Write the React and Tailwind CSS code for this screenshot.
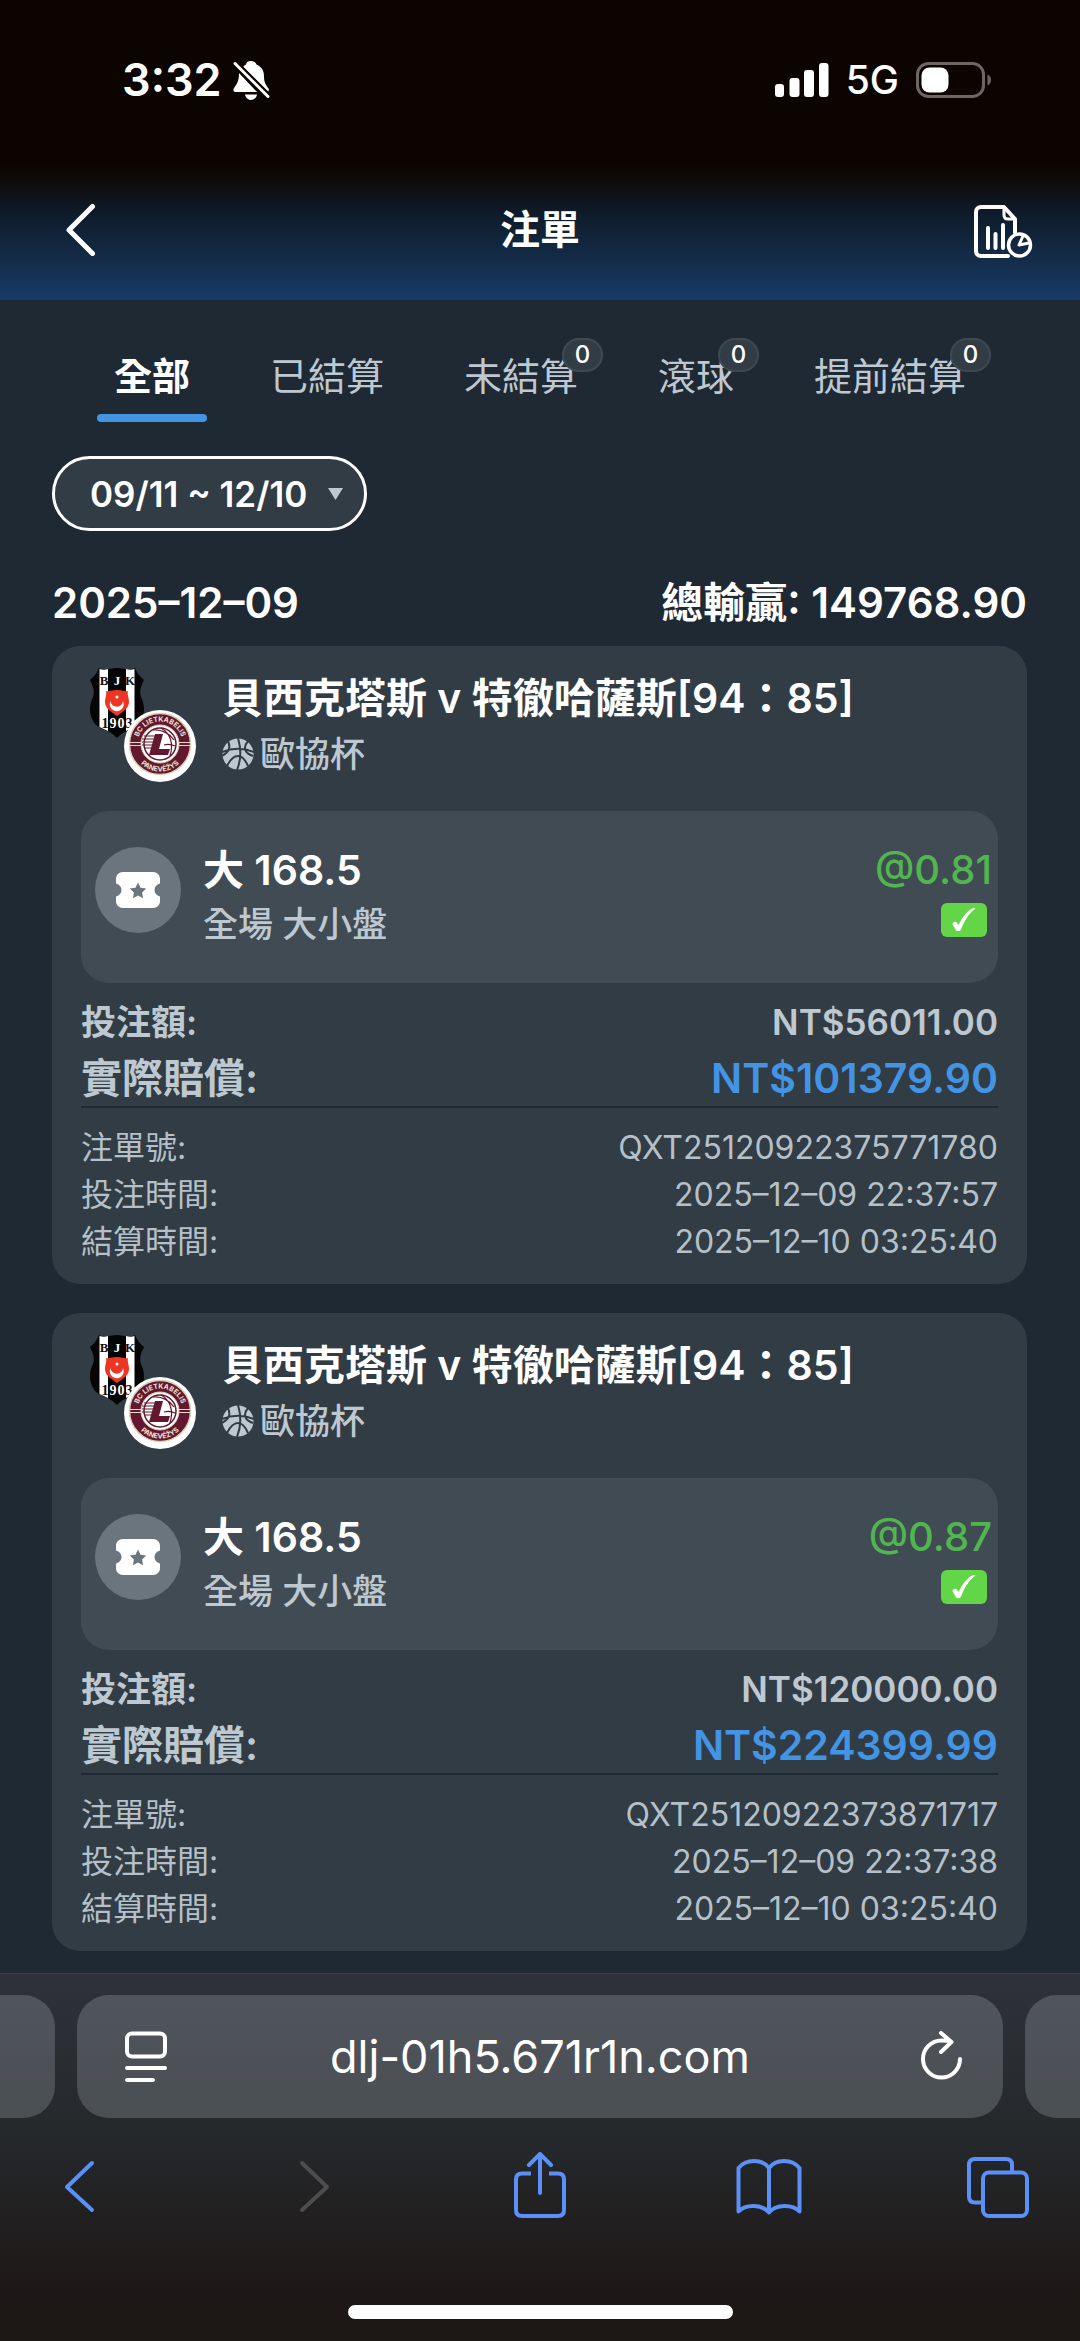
import React, { useState } from 'react';

const tabs = [
  { id: 'all', label: '全部' },
  { id: 'settled', label: '已結算' },
  { id: 'unsettled', label: '未結算', count: 0 },
  { id: 'live', label: '滾球', count: 0 },
  { id: 'early', label: '提前結算', count: 0 },
];

const bets = [
  {
    id: 'QXT25120922375771780',
    match: '貝西克塔斯 v 特徹哈薩斯[94：85]',
    league: '歐協杯',
    pick: '大 168.5',
    market: '全場 大小盤',
    odds: '@0.81',
    stake: 'NT$56011.00',
    payout: 'NT$101379.90',
    placedAt: '2025–12–09 22:37:57',
    settledAt: '2025–12–10 03:25:40',
  },
  {
    id: 'QXT25120922373871717',
    match: '貝西克塔斯 v 特徹哈薩斯[94：85]',
    league: '歐協杯',
    pick: '大 168.5',
    market: '全場 大小盤',
    odds: '@0.87',
    stake: 'NT$120000.00',
    payout: 'NT$224399.99',
    placedAt: '2025–12–09 22:37:38',
    settledAt: '2025–12–10 03:25:40',
  },
];

const StatusBar = () => (
  <div className="flex h-[160px] items-center justify-between pl-[122px] pr-[88px]">
    <div className="flex items-center gap-[11px]">
      <span className="text-[45px] font-semibold leading-[56px]">3:32</span>
      <svg className="h-[40px] w-[37px]" viewBox="0 0 37 40" fill="#fff">
        <path d="M18 1c3 0 5 2 5.500 3.500C29 7 31 11 31 16c0 7 2 9 4.500 12.500.5 1 .5 2-.5 3L10 7c1-1 2-2 3-2.500C13.500 2 15 1 18 1z" />
        <path d="M6 13L24 32H2.500C0 32 0 29.500 1 28c3-4 5-7 5-15z" />
        <path d="M12 34.500h12c-.5 3-3 5.500-6 5.500s-5.500-2.500-6-5.500z" />
        <path d="M2 3.500L35 36.500" stroke="#0c0400" strokeWidth="7" />
        <path d="M2 3.500L35 36.500" stroke="#fff" strokeWidth="3" strokeLinecap="round" />
      </svg>
    </div>
    <div className="flex items-center gap-[17px]">
      <svg className="h-[34px] w-[54px]" viewBox="0 0 54 34" fill="#fff">
        <rect x="0" y="21" width="9" height="13" rx="3" />
        <rect x="14.500" y="15" width="10" height="19" rx="3" />
        <rect x="29" y="7" width="10" height="27" rx="3" />
        <rect x="44" y="0" width="9.500" height="34" rx="3" />
      </svg>
      <span className="text-[39px] font-medium leading-[56px]">5G</span>
      <svg className="h-[36px] w-[76px]" viewBox="0 0 76 36">
        <rect x="1.500" y="1.500" width="66" height="33" rx="11" fill="none" stroke="#6d6665" strokeWidth="3" />
        <rect x="5.500" y="5.500" width="27" height="25" rx="8" fill="#fff" />
        <path d="M71.500 12.500c2.500 1 3.500 3 3.500 5.500s-1 4.500-3.500 5.500z" fill="#6d6665" />
      </svg>
    </div>
  </div>
);

const ReportIcon = () => (
  <svg className="h-[58px] w-[60px]" viewBox="0 -4 60 58" fill="none" stroke="#fff" strokeWidth="4" strokeLinejoin="round" strokeLinecap="round">
    <path d="M34 51H7c-3 0-5-2-5-5V7c0-3 2-5 5-5h23l11 12v14" />
    <path d="M30 3v7c0 3 1.500 4 4 4h7" strokeWidth="3" />
    <path d="M14 23v20M21.500 29v14M29 20v23" />
    <circle cx="45.500" cy="40" r="11" strokeWidth="3.500" />
    <path d="M49 31l-4 9 10-2" strokeWidth="3" />
  </svg>
);

const BjkLogo = () => (
  <svg className="absolute left-[9px] top-0 h-[70px] w-[54px]" viewBox="0 0 54 70">
    <path d="M9 0C15 3 21 0 27 0s12 3 18 0c2 5 5 9 9 12-3 6-5 11-3 17 3 6 4 13 2 19-2 8-8 12-14 14-5 2-8 4-12 8-4-4-7-6-12-8C9 60 3 56 1 48c-2-6-1-13 2-19 2-6 0-11-3-17 4-3 7-7 9-12z" fill="#050505" />
    <path d="M9.500 1c3 1 6 1 8.500 0v62l-8.500-4z" fill="#fff" />
    <path d="M36 1c3 1 6 1 8.500 0v58L36 63z" fill="#fff" />
    <path d="M16 23c3 1 5-1 11-1s8 2 11 1c-1 4 1 6 1 11 0 6-5 9-12 14-7-5-12-8-12-14 0-5 2-7 1-11z" fill="#ee3524" />
    <path d="M20.500 33a7 7 0 1 0 12.500 0a6 5.500 0 1 1-12.500 0z" fill="#fff" />
    <circle cx="27" cy="29" r="1.500" fill="#fff" />
    <g fontFamily="Liberation Serif, serif" fontWeight="700" fontSize="13" textAnchor="middle">
      <text x="14" y="17" fill="#111">B</text>
      <text x="27" y="17" fill="#fff">J</text>
      <text x="40" y="17" fill="#111">K</text>
    </g>
    <g fontFamily="Liberation Serif, serif" fontWeight="700" fontSize="14" textAnchor="middle">
      <text x="15" y="60" fill="#111">1</text>
      <text x="23" y="60" fill="#fff">9</text>
      <text x="31" y="60" fill="#fff">0</text>
      <text x="39" y="60" fill="#111">3</text>
    </g>
  </svg>
);

const LietkabelisLogo = ({ id }) => (
  <svg className="absolute left-[43px] top-[42px] h-[72px] w-[72px]" viewBox="0 0 72 72">
    <defs>
      <path id={`top-${id}`} d="M13.500 34a22.500 22.500 0 0 1 45 0" />
      <path id={`bottom-${id}`} d="M8.500 34a27.500 27.500 0 0 0 55 0" />
    </defs>
    <circle cx="36" cy="36" r="36" fill="#fff" />
    <circle cx="36" cy="34" r="30.500" fill="#63182f" stroke="#d9cfb4" strokeWidth="1.500" />
    <path d="M6 32.500h60M6 35.500h60" stroke="#e6dccb" strokeWidth="1.200" />
    <circle cx="36" cy="34" r="19" fill="#fff" stroke="#d9cfb4" />
    <circle cx="36" cy="34" r="16" fill="none" stroke="#63182f" strokeWidth="1.500" />
    <g fill="none" stroke="#63182f" strokeWidth="1.200">
      <path d="M29 20c9-1 17 4 21 10M37 18c9 5 13 15 9 28M51 36c-4-2-8-2-11-1" />
      <path d="M20 26h11M18 29h12M18 32h12M18 35h11M20 38h8" />
    </g>
    <path d="M31 24h8l-4 15h11l-2 6H25z" fill="#63182f" />
    <g fontFamily="Inter, sans-serif" fontWeight="700" fontSize="7" fill="#efe3d2" textAnchor="middle">
      <text><textPath href={`#top-${id}`} startOffset="50%">BC LIETKABELIS</textPath></text>
      <text><textPath href={`#bottom-${id}`} startOffset="50%">PANEVĖŽYS</textPath></text>
    </g>
  </svg>
);

const Basketball = () => (
  <svg className="h-[32px] w-[32px]" viewBox="0 0 32 32">
    <circle cx="16" cy="16" r="15.500" fill="#bec8d0" />
    <g fill="none" stroke="#313c45" strokeWidth="2">
      <path d="M0 14c10-4 22-4 32 0M16 0c3 10 3 22-1 32M6 3c3 7 1 11-6 15M26 3c-5 6-4 12 5 15M5 28c4-8 8-10 11-10s7 3 10 10" />
    </g>
  </svg>
);

const BetCard = ({ bet }) => (
  <article className="rounded-[28px] bg-[#313c45] px-[29px] pb-[19px] pt-[22px]">
    <header className="flex h-[114px] items-end">
      <div className="relative h-full w-[141px] shrink-0">
        <BjkLogo />
        <LietkabelisLogo id={bet.id} />
      </div>
      <div>
        <h2 className="text-[41px] font-semibold leading-[56px]">{bet.match}</h2>
        <p className="flex items-center gap-[6px] text-[35px] font-medium leading-[56px] text-[#bec8d0]">
          <Basketball />
          {bet.league}
        </p>
      </div>
    </header>

    <section className="mt-[29px] flex items-start rounded-[28px] bg-[#404b54] py-8 pl-[14px] pr-[6px]">
      <div className="mr-[22px] mt-1 flex size-[86px] items-center justify-center rounded-full bg-[#6b757e]">
        <svg className="h-[36px] w-[44px]" viewBox="0 0 44 36">
          <path d="M7 0h30c4 0 7 3 7 7v4.500c-3.500 1-5.500 3.500-5.500 6.500s2 5.500 5.500 6.500V29c0 4-3 7-7 7H7c-4 0-7-3-7-7v-4.500c3.500-1 5.500-3.500 5.500-6.500S3.500 12.500 0 11.500V7c0-4 3-7 7-7z" fill="#fff" />
          <path d="M22 10.500l2.500 5.200 5.700.8-4.100 4 1 5.700-5.100-2.700-5.100 2.700 1-5.700-4.100-4 5.700-.8z" fill="#6b757e" />
        </svg>
      </div>
      <div className="flex-1 leading-[54px]">
        <p className="text-[41px] font-semibold">{bet.pick}</p>
        <p className="text-[35px] font-medium text-[#bec8d0]">{bet.market}</p>
      </div>
      <div className="flex flex-col items-end">
        <p className="text-[40px] font-medium leading-[54px] text-[#51b64f]">{bet.odds}</p>
        <span className="mr-[5px] mt-[6px] flex h-[34px] w-[46px] items-center justify-center rounded-md bg-[#63d648]">
          <svg className="h-[24px] w-[24px]" viewBox="0 0 24 24" fill="#fff">
            <path d="M23.500.5C16 6 12 14 9 21.500c-1 2-4.500 2.500-5.500 0C2.500 19 1 17.500.5 16c0-2.500 4-3.500 5-.5l1 1.500C10 10 15.500 1.500 22 0z" />
          </svg>
        </span>
      </div>
    </section>

    <dl className="mt-[11px] border-b-2 border-[#1f2a35] font-semibold leading-[56px] text-[#bec8d0]">
      <div className="flex justify-between text-[35px]">
        <dt>投注額:</dt>
        <dd>{bet.stake}</dd>
      </div>
      <div className="flex justify-between text-[41px]">
        <dt>實際賠償:</dt>
        <dd className="text-[#4494e4]">{bet.payout}</dd>
      </div>
    </dl>

    <dl className="mt-4 text-[32px] leading-[47px] text-[#b6c0c8]">
      <div className="flex justify-between">
        <dt>注單號:</dt>
        <dd>{bet.id}</dd>
      </div>
      <div className="flex justify-between">
        <dt>投注時間:</dt>
        <dd>{bet.placedAt}</dd>
      </div>
      <div className="flex justify-between">
        <dt>結算時間:</dt>
        <dd>{bet.settledAt}</dd>
      </div>
    </dl>
  </article>
);

const ToolIcon = ({ label, color = '#5a90f8', children }) => (
  <button type="button" aria-label={label}>
    <svg className="h-[66px] w-[68px]" viewBox="0 0 68 66" fill="none" stroke={color} strokeWidth="4" strokeLinecap="round" strokeLinejoin="round">
      {children}
    </svg>
  </button>
);

const BrowserBar = () => (
  <footer className="border-t border-[#3d4044] bg-linear-to-b from-[#2e3239] via-[#25282b] via-45% to-[#1d1715] to-90%">
    <div className="flex h-[144px] gap-[22px] pt-[21px]">
      <div className="w-[55px] rounded-r-[32px] bg-linear-to-b from-[#50545c] to-[#4a4f53]" />
      <div className="flex flex-1 items-center justify-between rounded-[32px] bg-linear-to-b from-[#50545c] to-[#4a4f53] px-[40px]">
        <button type="button" aria-label="Page settings" className="w-[50px] pl-2">
          <svg className="h-[52px] w-[42px]" viewBox="0 0 42 52" fill="none" stroke="#fff" strokeWidth="4" strokeLinecap="round">
            <rect x="2" y="2.500" width="38" height="23" rx="5" />
            <path d="M2 37h38M2 49h26" />
          </svg>
        </button>
        <button type="button" className="text-[45px] leading-[60px]">dlj-01h5.671r1n.com</button>
        <button type="button" aria-label="Reload" className="w-[50px] pl-2">
          <svg className="h-[52px] w-[42px]" viewBox="0 0 42 52" fill="none" stroke="#fff" strokeWidth="4" strokeLinecap="round" strokeLinejoin="round">
            <path d="M39 28a18.500 18.500 0 1 1-18.500-18.500c3.500 0 6 0 9 .8M20 2l10.500 9L20 21" />
          </svg>
        </button>
      </div>
      <div className="w-[55px] rounded-l-[32px] bg-linear-to-b from-[#50545c] to-[#4a4f53]" />
    </div>
    <div className="mt-[34px] flex justify-between px-[46px]">
      <ToolIcon label="Back">
        <path d="M46 11L21 35l25 23" />
      </ToolIcon>
      <ToolIcon label="Forward" color="#4d4d4e">
        <path d="M26 11l25 24-25 23" />
      </ToolIcon>
      <ToolIcon label="Share">
        <path d="M25 21.500H16c-4 0-6 2-6 6V58c0 4 2 6 6 6h36c4 0 6-2 6-6V27.500c0-4-2-6-6-6h-9" strokeLinecap="butt" />
        <path d="M34 41V3M23 13L34 2l11 11" />
      </ToolIcon>
      <ToolIcon label="Bookmarks">
        <path d="M33 16C26 6.500 10 6.500 2.500 16v43.500c7-7.500 23.500-7.500 30.500 1 7-8.500 23.500-8.500 30.500-1V16C56 6.500 40 6.500 33 16zM33 16v44" />
      </ToolIcon>
      <ToolIcon label="Tabs">
        <rect x="17" y="20.500" width="44" height="43.500" rx="6" />
        <path d="M17 50.500H9c-4 0-6-2-6-6V13c0-4 2-6 6-6h31c4 0 6 2 6 6v7" strokeLinecap="butt" />
      </ToolIcon>
    </div>
    <div className="mx-auto mb-[22px] mt-[87px] h-[14px] w-[385px] rounded-full bg-white" />
  </footer>
);

const App = () => {
  const [activeTab, setActiveTab] = useState('all');

  return (
    <div className="flex min-h-screen flex-col bg-[#1f2934] font-['Inter','Noto_Sans_CJK_TC',sans-serif] text-white">
      <div className="bg-linear-to-b from-[#0c0400] from-54% via-[#0e1a27] via-70% to-[#183c68]">
        <StatusBar />
        <header className="flex h-[140px] items-center justify-between px-[46px]">
          <button type="button" aria-label="返回" className="w-[60px] pl-[18px]">
            <svg className="h-[52px] w-[32px]" viewBox="0 0 32 52" fill="none" stroke="#fff" strokeWidth="5" strokeLinecap="round" strokeLinejoin="round">
              <path d="M28.500 2.500L5 26l23.500 23.500" />
            </svg>
          </button>
          <h1 className="text-[40px] font-semibold leading-[56px]">注單</h1>
          <button type="button" aria-label="報表">
            <ReportIcon />
          </button>
        </header>
      </div>

      {/* Bet status tabs */}
      <nav className="flex h-[122px] justify-center gap-[80px] pt-[52px] text-[38px] leading-[48px]">
        {tabs.map((tab) => (
          <button
            key={tab.id}
            type="button"
            onClick={() => setActiveTab(tab.id)}
            className={`relative flex items-start ${activeTab === tab.id ? 'font-bold text-white' : 'text-[#bec8d0]'}`}
          >
            {tab.label}
            {tab.count !== undefined && (
              <span className="absolute -right-[25px] -top-[14px] flex h-[34px] w-[41px] items-center justify-center rounded-full border-2 border-[#3e4952] bg-[#313c45] text-[24px] font-medium leading-[30px] text-white">
                {tab.count}
              </span>
            )}
            {activeTab === tab.id && (
              <span className="absolute -inset-x-[17px] bottom-0 h-2 rounded-full bg-[#4494e4]" />
            )}
          </button>
        ))}
      </nav>

      <main className="flex-1 pb-[22px] pl-[52px] pr-[53px] pt-[34px]">
        <div className="relative inline-flex h-[75px] items-center rounded-full border-3 border-white bg-[#313c45]">
          <select
            aria-label="日期範圍"
            className="appearance-none bg-transparent pl-[35px] pr-[56px] text-[35px] font-semibold leading-[48px] outline-none"
          >
            <option>09/11 ~ 12/10</option>
          </select>
          <svg className="pointer-events-none absolute right-[21px] h-[12px] w-[15px]" viewBox="0 0 15 12" fill="#bec8d0">
            <path d="M0 0h15L7.500 12z" />
          </svg>
        </div>

        <div className="mb-[13px] mt-[42px] flex justify-between text-[42px] font-semibold leading-[60px]">
          <span>2025–12–09</span>
          <span>總輸贏: 149768.90</span>
        </div>

        <div className="flex flex-col gap-[29px]">
          {bets.map((bet) => (
            <BetCard key={bet.id} bet={bet} />
          ))}
        </div>
      </main>

      <BrowserBar />
    </div>
  );
};

export default App;
